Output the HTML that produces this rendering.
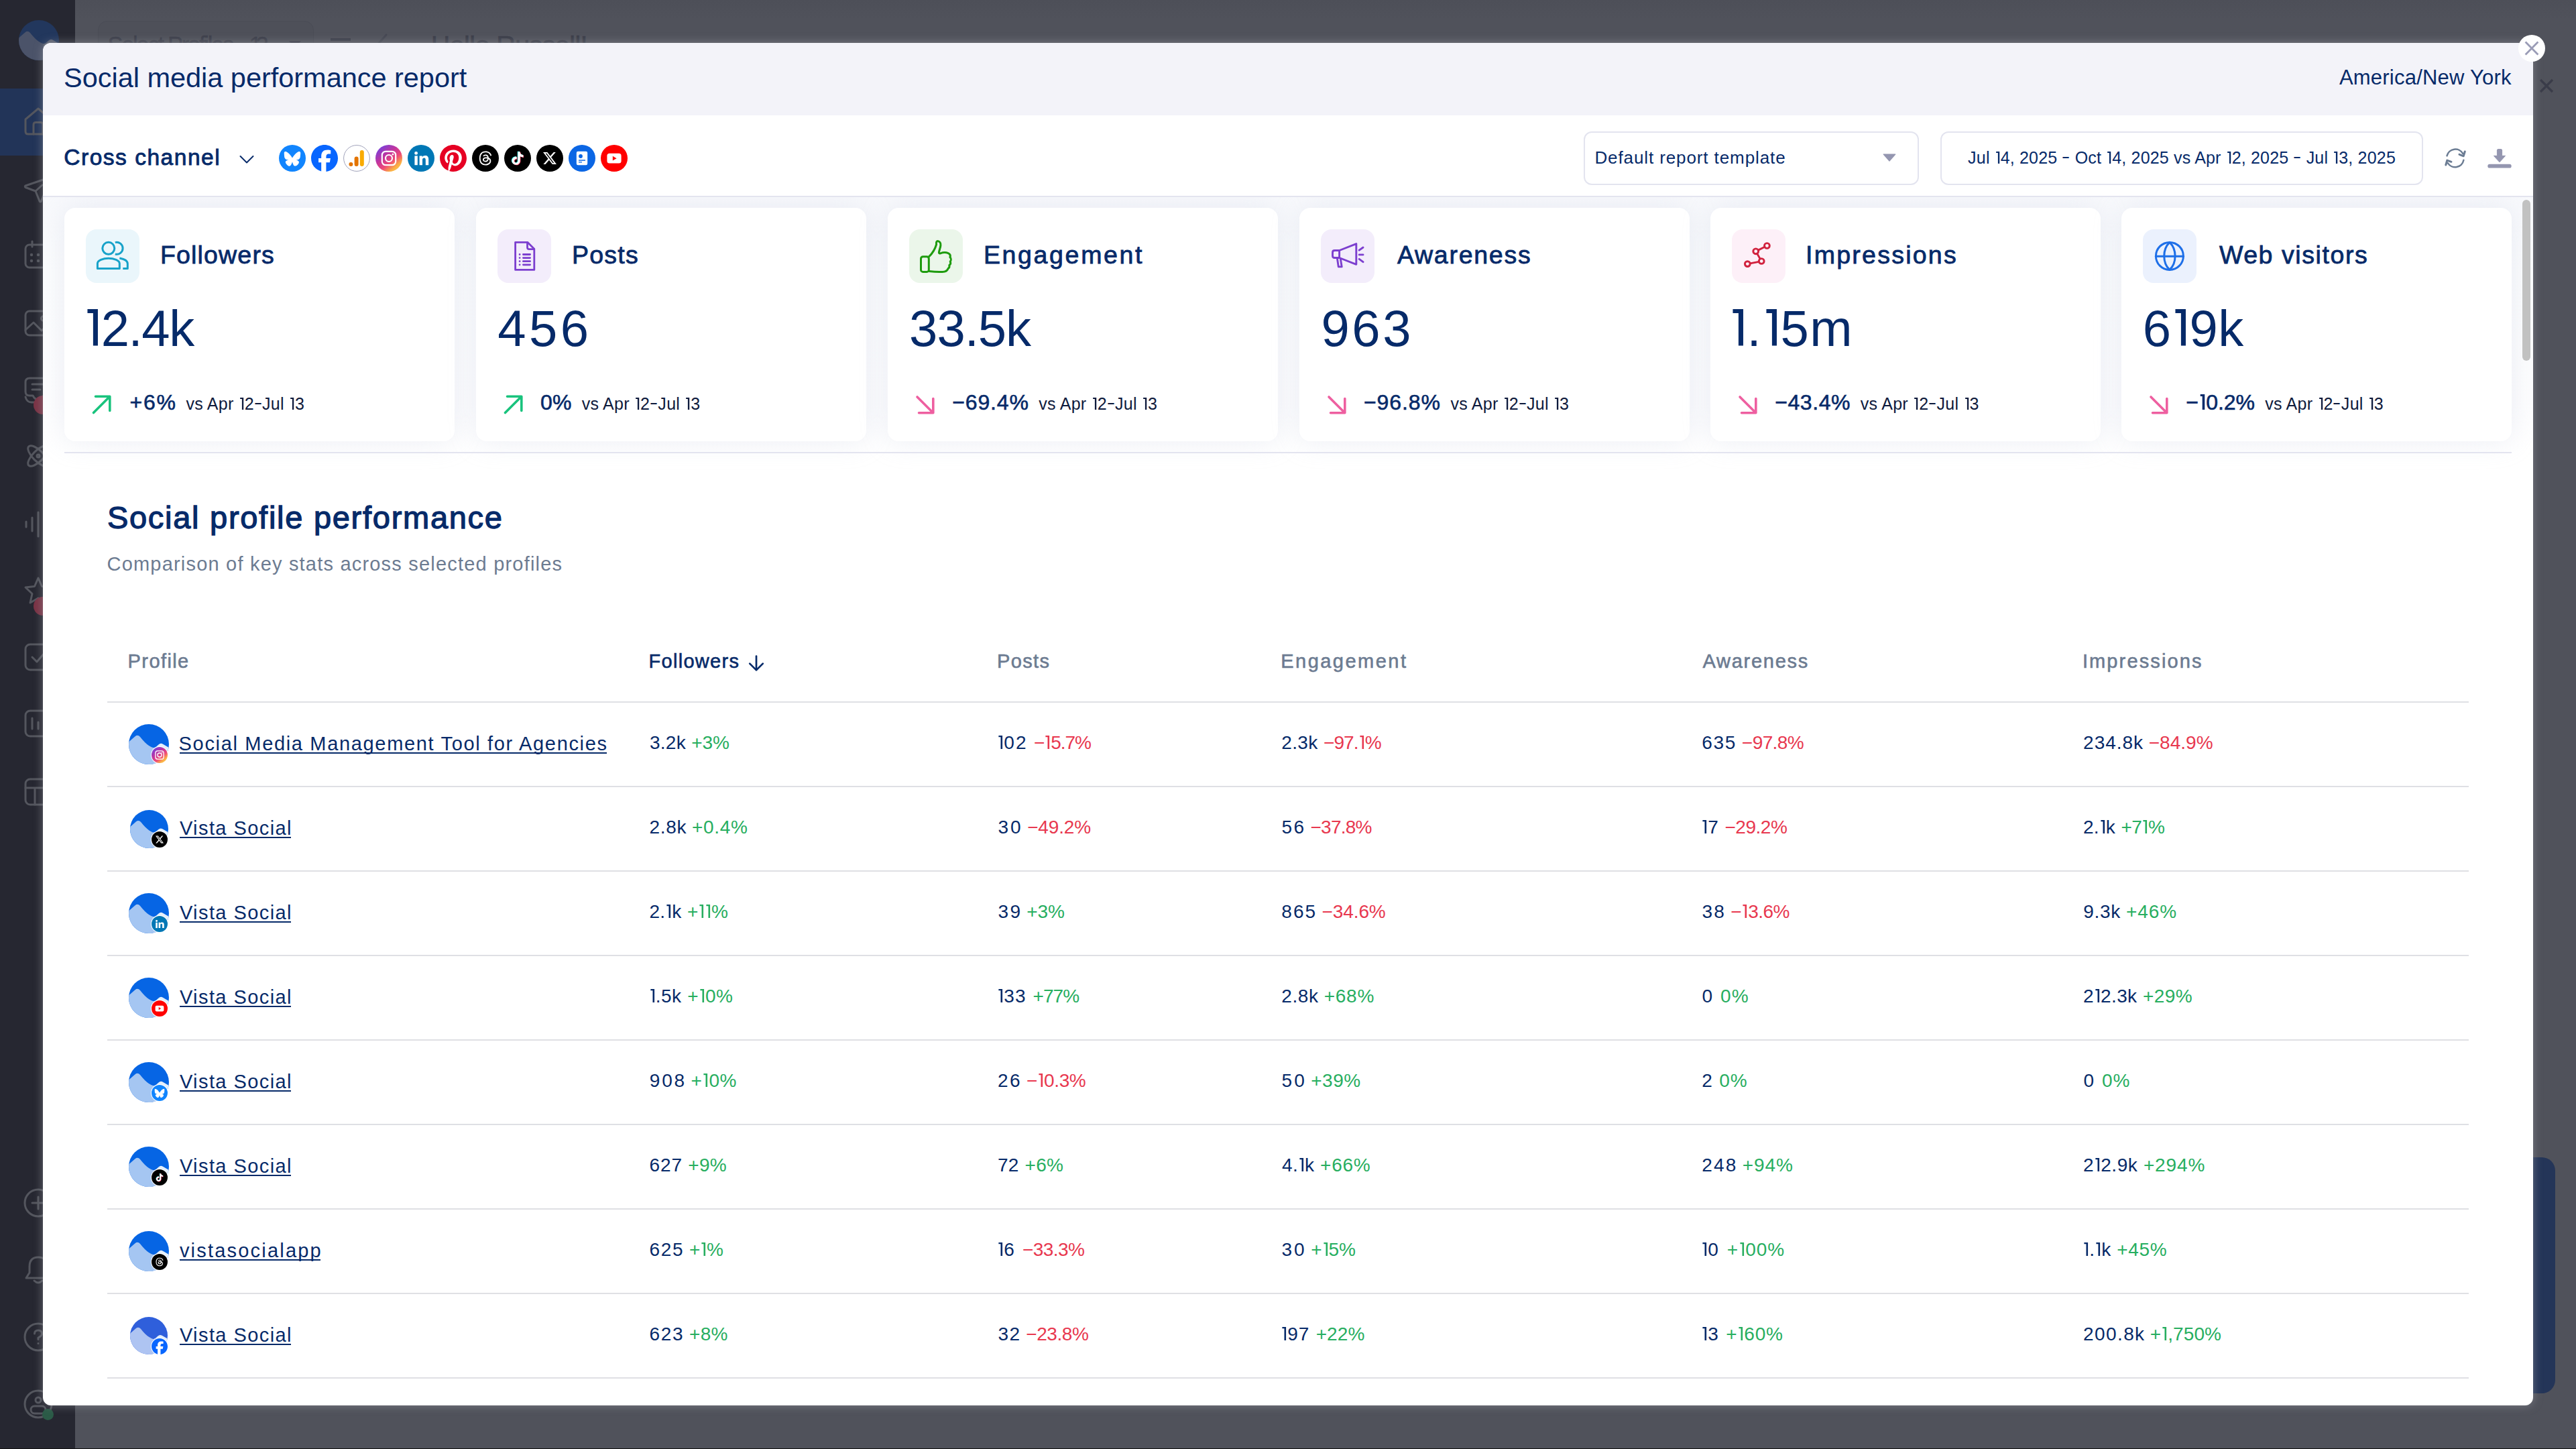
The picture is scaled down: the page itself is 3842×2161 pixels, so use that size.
<!DOCTYPE html><html><head><meta charset='utf-8'><title>Social media performance report</title><style>
*{box-sizing:border-box;margin:0;padding:0}
html,body{width:3842px;height:2161px;overflow:hidden;background:#50525b;font-family:"Liberation Sans",sans-serif;color:#062a69}
.abs{position:absolute}
#side{position:absolute;left:0;top:0;width:112px;height:2161px;background:#262731}
#side .act{position:absolute;left:0;top:132px;width:112px;height:100px;background:#223458}
#main{position:absolute;left:112px;top:0;width:3730px;height:2161px;background:#50525b}
#modal{position:absolute;left:64px;top:64px;width:3714px;height:2032px;background:#fff;border-radius:12px;overflow:hidden;box-shadow:0 0 14px rgba(150,152,160,.6)}
#mhead{position:absolute;left:0;top:0;width:100%;height:108px;background:#f3f3f9}
#tool{position:absolute;left:0;top:108px;width:100%;height:122px;border-bottom:2px solid #e3e4ef;background:#fff}
.t{position:absolute;white-space:nowrap;line-height:1;transform-origin:0 0}
.card{position:absolute;top:16px;width:582px;height:348px;background:#fff;border-radius:16px;box-shadow:0 0 40px rgba(190,197,220,.28)}
.ibox{position:absolute;left:32px;top:32px;width:80px;height:80px;border-radius:16px}
.hr{position:absolute;height:2px;background:#dfe0e4}
.one{display:inline-block;width:.358em;height:.716em;vertical-align:baseline;fill:currentColor}
</style></head><body>
<div id='main'></div><div id='side'><div class='act'></div></div>
<div class='abs' style='left:112px;top:0;width:3730px;height:30px;background:linear-gradient(#4d4f58,#50525b)'></div>
<div class='abs' style='left:146px;top:31px;width:322px;height:90px;border-radius:14px;background:#4e5059;border:1px solid #4a4c56'></div>
<div class='t' style='left:160.38px;top:49.80px;font-size:34.5px;letter-spacing:-2.259px;color:#3c3e4a;-webkit-text-stroke:0.4px currentColor;'>Select Profiles</div>
<div class='t' style='left:371.38px;top:49.80px;font-size:34.5px;letter-spacing:-9.125px;color:#3c3e4a;-webkit-text-stroke:0.4px currentColor;'>12</div>
<svg class='abs' style='left:430px;top:60px' width='20' height='12' viewBox='0 0 20 12'><path d='M1 1 H19 L10 11 Z' fill='#3c3e4a'/></svg>
<div class='abs' style='left:493px;top:57px;width:30px;height:4px;background:#3c3e4a'></div>
<svg class='abs' style='left:556px;top:50px' width='30' height='20' viewBox='0 0 30 20' fill='none' stroke='#454752' stroke-width='3' stroke-linecap='round'><path d='M20 2 L6 18'/></svg>
<div class='t' style='left:642.75px;top:47.56px;font-size:39.5px;letter-spacing:-0.587px;color:#3a3c48;-webkit-text-stroke:0.6px currentColor;'>Hello Russell!</div>
<svg class='abs' style='left:27.5px;top:30px' width='60' height='60' viewBox='0 0 60 60'><defs><clipPath id='lg'><circle cx='30' cy='30' r='30'/></clipPath></defs><g clip-path='url(#lg)'><rect width='60' height='60' fill='#22375d'/><path d='M-1 27.5 L9.5 18.2 Q13.5 15 17 19 Q24 28 30 32 Q34.5 35 37.5 35.6 L60 48 V61 H-1 Z' fill='#4b5369'/><path d='M36.5 35.8 Q41 34.5 44.5 30.5 Q47.5 27.6 51 29.8 L61 35.5 V61 H36 Z' fill='#5d6373'/></g></svg>
<svg class='abs' style='left:35.0px;top:159.0px' width='44' height='44' viewBox='0 0 44 44' fill='none' stroke='#54565e' stroke-width='3' stroke-linecap='round' stroke-linejoin='round'><path d='M3 19 L22 3 L41 19 V37 Q41 41 37 41 H7 Q3 41 3 37 Z'/><path d='M15 41 V27 Q15 23.5 18.5 23.5 H25.5 Q29 23.5 29 27 V41'/></svg>
<svg class='abs' style='left:35.0px;top:260.0px' width='44' height='44' viewBox='0 0 44 44' fill='none' stroke='#54565e' stroke-width='3' stroke-linecap='round' stroke-linejoin='round'><path d='M41 4 L3 17 Q1.5 18 3 19.5 L18 25 L24 40 Q25 42 26.5 40 Z'/><path d='M18 25 L28 16'/></svg>
<svg class='abs' style='left:35.0px;top:358.0px' width='44' height='44' viewBox='0 0 44 44' fill='none' stroke='#54565e' stroke-width='3' stroke-linecap='round' stroke-linejoin='round'><rect x='3' y='7' width='38' height='34' rx='6'/><path d='M13 2 V10 M31 2 V10'/><path d='M12 22 h0.01 M22 22 h0.01 M32 22 h0.01 M12 31 h0.01 M22 31 h0.01 M32 31 h0.01' stroke-width='4.5'/></svg>
<svg class='abs' style='left:35.0px;top:460.0px' width='44' height='44' viewBox='0 0 44 44' fill='none' stroke='#54565e' stroke-width='3' stroke-linecap='round' stroke-linejoin='round'><rect x='3' y='4' width='38' height='36' rx='6'/><circle cx='30' cy='15' r='3.5'/><path d='M3 32 L15 21 L27 33 L33 28 L41 35'/></svg>
<svg class='abs' style='left:35.0px;top:560.0px' width='44' height='44' viewBox='0 0 44 44' fill='none' stroke='#54565e' stroke-width='3' stroke-linecap='round' stroke-linejoin='round'><path d='M9 4 H35 Q41 4 41 10 V24 Q41 30 35 30 H30 Q27 36 22 36 Q17 36 14 30 H9 Q3 30 3 24 V10 Q3 4 9 4 Z'/><path d='M13 13 H31 M13 21 H25'/><path d='M3 32 Q5 40 12 40 H32'/></svg>
<svg class='abs' style='left:35.0px;top:658.0px' width='44' height='44' viewBox='0 0 44 44' fill='none' stroke='#54565e' stroke-width='3' stroke-linecap='round' stroke-linejoin='round'><ellipse cx='22' cy='22' rx='20' ry='8' transform='rotate(45 22 22)'/><ellipse cx='22' cy='22' rx='20' ry='8' transform='rotate(-45 22 22)'/><circle cx='22' cy='22' r='2'/></svg>
<svg class='abs' style='left:35.0px;top:760.0px' width='44' height='44' viewBox='0 0 44 44' fill='none' stroke='#54565e' stroke-width='3' stroke-linecap='round' stroke-linejoin='round'><path d='M4 18 V26 M13 12 V32 M22 4 V40 M31 12 V32 M40 18 V26'/></svg>
<svg class='abs' style='left:35.0px;top:859.0px' width='44' height='44' viewBox='0 0 44 44' fill='none' stroke='#54565e' stroke-width='3' stroke-linecap='round' stroke-linejoin='round'><path d='M22 3 L27.5 15.5 L41 17 L31 26.5 L34 40 L22 33 L10 40 L13 26.5 L3 17 L16.5 15.5 Z'/></svg>
<svg class='abs' style='left:35.0px;top:958.0px' width='44' height='44' viewBox='0 0 44 44' fill='none' stroke='#54565e' stroke-width='3' stroke-linecap='round' stroke-linejoin='round'><rect x='3' y='3' width='38' height='38' rx='7'/><path d='M13 22 L20 29 L32 15'/></svg>
<svg class='abs' style='left:35.0px;top:1057.0px' width='44' height='44' viewBox='0 0 44 44' fill='none' stroke='#54565e' stroke-width='3' stroke-linecap='round' stroke-linejoin='round'><rect x='3' y='3' width='38' height='38' rx='7'/><path d='M13 14 V30 M22 20 V30 M31 10 V30'/></svg>
<svg class='abs' style='left:35.0px;top:1159.0px' width='44' height='44' viewBox='0 0 44 44' fill='none' stroke='#54565e' stroke-width='3' stroke-linecap='round' stroke-linejoin='round'><rect x='3' y='3' width='38' height='38' rx='7'/><path d='M3 16 H41 M17 16 V41'/></svg>
<svg class='abs' style='left:35.0px;top:1772.0px' width='44' height='44' viewBox='0 0 44 44' fill='none' stroke='#54565e' stroke-width='3' stroke-linecap='round' stroke-linejoin='round'><circle cx='22' cy='22' r='20'/><path d='M22 13 V31 M13 22 H31'/></svg>
<svg class='abs' style='left:35.0px;top:1872.0px' width='44' height='44' viewBox='0 0 44 44' fill='none' stroke='#54565e' stroke-width='3' stroke-linecap='round' stroke-linejoin='round'><path d='M22 3 Q35 3 35 17 V26 L40 34 H4 L9 26 V17 Q9 3 22 3 Z'/><path d='M16 38 Q22 44 28 38'/></svg>
<svg class='abs' style='left:35.0px;top:1972.0px' width='44' height='44' viewBox='0 0 44 44' fill='none' stroke='#54565e' stroke-width='3' stroke-linecap='round' stroke-linejoin='round'><circle cx='22' cy='22' r='20'/><path d='M16.5 17 Q16.5 12 22 12 Q27.5 12 27.5 17 Q27.5 20.5 22 23 V25.5 M22 31.5 h0.01'/></svg>
<svg class='abs' style='left:35.0px;top:2072.0px' width='44' height='44' viewBox='0 0 44 44' fill='none' stroke='#54565e' stroke-width='3' stroke-linecap='round' stroke-linejoin='round'><circle cx='22' cy='22' r='20'/><circle cx='22' cy='16' r='4'/><rect x='11' y='25' width='22' height='11' rx='5.5'/></svg>
<div class='abs' style='left:50px;top:590px;width:28px;height:28px;border-radius:50%;background:#7a3345'></div>
<div class='abs' style='left:50px;top:890px;width:28px;height:28px;border-radius:50%;background:#7a3345'></div>
<div class='abs' style='left:63px;top:2101px;width:17px;height:17px;border-radius:50%;background:#2b5b47'></div>
<div class='abs' style='left:3700px;top:1726px;width:110.5px;height:352px;border-radius:0 20px 20px 0;background:#243558'></div>
<svg class='abs' style='left:3786px;top:116px' width='24' height='24' viewBox='0 0 24 24' fill='none' stroke='#3a3c49' stroke-width='3.2' stroke-linecap='butt'><path d='M3 3 L21 21 M21 3 L3 21'/></svg>
<div class='abs' style='left:0;top:2160px;width:3842px;height:1px;background:#111'></div>
<div id='modal'>
<div id='mhead'></div><div id='tool'></div>
<div class='t' style='left:31.12px;top:31.37px;font-size:41.5px;letter-spacing:-0.029px;'>Social media performance report</div>
<div class='t' style='left:3424.88px;top:35.76px;font-size:31px;letter-spacing:0.225px;'>America/New York</div>
<div class='t' style='left:31.25px;top:153.64px;font-size:33.5px;letter-spacing:1.521px;-webkit-text-stroke:0.9px currentColor;'>Cross channel</div>
<svg class='abs' style='left:290px;top:164px' width='28' height='20' viewBox='0 0 28 20' fill='none' stroke='#062a69' stroke-width='2' stroke-linecap='round' stroke-linejoin='round'><path d='M4.5 5 L14 14.5 L23.5 5'/></svg>
<svg class='abs' style='left:352px;top:152px;' width='40' height='40' viewBox='0 0 40 40'><circle cx='20' cy='20' r='20' fill='#1185fe'/><path transform='translate(7.75 8.55) scale(1.0208)' d='M12 10.8c-1.087-2.114-4.046-6.053-6.798-7.995C2.566.944 1.561 1.266.902 1.565.139 1.908 0 3.08 0 3.768c0 .69.378 5.65.624 6.479.815 2.736 3.713 3.66 6.383 3.364.136-.02.275-.039.415-.056-.138.022-.276.04-.415.056-3.912.58-7.387 2.005-2.83 7.078 5.013 5.19 6.87-1.113 7.823-4.308.953 3.195 2.05 9.271 7.733 4.308 4.267-4.308 1.172-6.498-2.74-7.078a8.741 8.741 0 0 1-.415-.056c.14.017.279.036.415.056 2.67.297 5.568-.628 6.383-3.364.246-.828.624-5.79.624-6.478 0-.69-.139-1.861-.902-2.206-.659-.298-1.664-.62-4.3 1.24C16.046 4.748 13.087 8.687 12 10.8Z' fill='#fff' /></svg>
<svg class='abs' style='left:400px;top:152px;' width='40' height='40' viewBox='0 0 40 40'><circle cx='20' cy='20' r='19.6' fill='#fff'/><path transform='translate(0.00 0.00) scale(1.6667)' d='M9.101 23.691v-7.98H6.627v-3.667h2.474v-1.58c0-4.085 1.848-5.978 5.858-5.978.401 0 .955.042 1.468.103a8.68 8.68 0 0 1 1.141.195v3.325a8.623 8.623 0 0 0-.653-.036 26.805 26.805 0 0 0-.733-.009c-.707 0-1.259.096-1.675.309a1.686 1.686 0 0 0-.679.622c-.258.42-.374.995-.374 1.752v1.297h3.919l-.386 2.103-.287 1.564h-3.246v8.245C19.396 23.238 24 18.179 24 12.044c0-6.627-5.373-12-12-12s-12 5.373-12 12c0 5.628 3.874 10.35 9.101 11.647Z' fill='#0866ff' /></svg>
<svg class='abs' style='left:448px;top:152px;' width='40' height='40' viewBox='0 0 40 40'><circle cx='20' cy='20' r='19.4' fill='#fff' stroke='#a0a2ba' stroke-width='1'/><circle cx='11.4' cy='29' r='3' fill='#e37400'/><rect x='16.6' y='17.6' width='6' height='14.4' rx='3' fill='#e37400'/><rect x='24.8' y='8' width='6' height='24' rx='3' fill='#f9ab00'/></svg>
<svg class='abs' style='left:496px;top:152px;' width='40' height='40' viewBox='0 0 40 40'><defs><linearGradient id='igt' x1='0.15' y1='0.1' x2='0.85' y2='0.95'><stop offset='0' stop-color='#7a3fd8'/><stop offset='0.35' stop-color='#c2359f'/><stop offset='0.62' stop-color='#ef4a77'/><stop offset='0.85' stop-color='#fbb044'/><stop offset='1' stop-color='#fcc552'/></linearGradient></defs><circle cx='20' cy='20' r='20' fill='url(#igt)'/><rect x='9.8' y='9.8' width='20.4' height='20.4' rx='5.4' fill='none' stroke='#fff' stroke-width='2.2'/><circle cx='20' cy='20' r='5' fill='none' stroke='#fff' stroke-width='2.2'/><circle cx='25.9' cy='14.2' r='1.35' fill='#fff'/></svg>
<svg class='abs' style='left:544px;top:152px;' width='40' height='40' viewBox='0 0 40 40'><circle cx='20' cy='20' r='20' fill='#0077b5'/><circle cx='12.6' cy='12.4' r='2.45' fill='#fff'/><rect x='10.4' y='16.4' width='4.4' height='13.8' fill='#fff'/><path d='M17.6 16.4 H21.8 V18.3 C22.6 16.9 24.2 16 26.2 16 C29.6 16 31.2 18 31.2 21.6 V30.2 H26.8 V22.6 C26.8 20.7 26.1 19.6 24.6 19.6 C23 19.6 22 20.7 22 22.6 V30.2 H17.6 Z' fill='#fff'/></svg>
<svg class='abs' style='left:592px;top:152px;' width='40' height='40' viewBox='0 0 40 40'><circle cx='20' cy='20' r='19.6' fill='#fff'/><path transform='translate(0.00 0.00) scale(1.6667)' d='M12.017 0C5.396 0 .029 5.367.029 11.987c0 5.079 3.158 9.417 7.618 11.162-.105-.949-.199-2.403.041-3.439.219-.937 1.406-5.957 1.406-5.957s-.359-.72-.359-1.781c0-1.663.967-2.911 2.168-2.911 1.024 0 1.518.769 1.518 1.688 0 1.029-.653 2.567-.992 3.992-.285 1.193.6 2.165 1.775 2.165 2.128 0 3.768-2.245 3.768-5.487 0-2.861-2.063-4.869-5.008-4.869-3.41 0-5.409 2.562-5.409 5.199 0 1.033.394 2.143.889 2.741.099.12.112.225.085.345-.09.375-.293 1.199-.334 1.363-.053.225-.172.271-.401.165-1.495-.69-2.433-2.878-2.433-4.646 0-3.776 2.748-7.252 7.92-7.252 4.158 0 7.392 2.967 7.392 6.923 0 4.135-2.607 7.462-6.233 7.462-1.214 0-2.354-.629-2.758-1.379l-.749 2.848c-.269 1.045-1.004 2.352-1.498 3.146 1.123.345 2.306.535 3.55.535 6.607 0 11.985-5.365 11.985-11.987C23.97 5.39 18.592.026 11.985.026L12.017 0z' fill='#e60023' /></svg>
<svg class='abs' style='left:640px;top:152px;' width='40' height='40' viewBox='0 0 40 40'><circle cx='20' cy='20' r='20' fill='#000'/><path transform='translate(9.50 9.50) scale(0.8750)' d='M12.186 24h-.007c-3.581-.024-6.334-1.205-8.184-3.509C2.35 18.44 1.5 15.586 1.472 12.01v-.017c.03-3.579.879-6.43 2.525-8.482C5.845 1.205 8.6.024 12.18 0h.014c2.746.02 5.043.725 6.826 2.098 1.677 1.29 2.858 3.13 3.509 5.467l-2.04.569c-1.104-3.96-3.898-5.984-8.304-6.015-2.91.022-5.11.936-6.54 2.717C4.307 6.504 3.616 8.914 3.589 12c.027 3.086.718 5.496 2.057 7.164 1.43 1.783 3.631 2.698 6.54 2.717 2.623-.02 4.358-.631 5.8-2.045 1.647-1.613 1.618-3.593 1.09-4.798-.31-.71-.873-1.3-1.634-1.75-.192 1.352-.622 2.446-1.284 3.272-.886 1.102-2.14 1.704-3.73 1.79-1.202.065-2.361-.218-3.259-.801-1.063-.689-1.685-1.74-1.752-2.964-.065-1.19.408-2.285 1.33-3.082.88-.76 2.119-1.207 3.583-1.291a13.853 13.853 0 0 1 3.02.142c-.126-.742-.375-1.332-.75-1.757-.513-.586-1.308-.883-2.359-.89h-.029c-.844 0-1.992.232-2.721 1.32L7.734 7.847c.98-1.454 2.568-2.256 4.478-2.256h.044c3.194.02 5.097 1.975 5.287 5.388.108.046.216.094.321.142 1.49.7 2.58 1.761 3.154 3.07.797 1.82.871 4.79-1.548 7.158-1.85 1.81-4.094 2.628-7.277 2.65Zm1.003-11.69c-.242 0-.487.007-.739.021-1.836.103-2.98.946-2.916 2.143.067 1.256 1.452 1.839 2.784 1.767 1.224-.065 2.818-.543 3.086-3.71a10.5 10.5 0 0 0-2.215-.221z' fill='#fff' /></svg>
<svg class='abs' style='left:688px;top:152px;' width='40' height='40' viewBox='0 0 40 40'><circle cx='20' cy='20' r='20' fill='#000'/><path transform='translate(9.55 9.85) scale(0.8125)' d='M12.525.02c1.31-.02 2.61-.01 3.91-.02.08 1.53.63 3.09 1.75 4.17 1.12 1.11 2.7 1.62 4.24 1.79v4.03c-1.44-.05-2.89-.35-4.2-.97-.57-.26-1.1-.59-1.62-.93-.01 2.92.01 5.84-.02 8.75-.08 1.4-.54 2.79-1.35 3.94-1.31 1.92-3.58 3.17-5.91 3.21-1.43.08-2.86-.31-4.08-1.03-2.02-1.19-3.44-3.37-3.65-5.71-.02-.5-.03-1-.01-1.49.18-1.9 1.12-3.72 2.58-4.96 1.66-1.44 3.98-2.13 6.15-1.72.02 1.48-.04 2.96-.04 4.44-.99-.32-2.15-.23-3.02.37-.63.41-1.11 1.04-1.36 1.75-.21.51-.15 1.07-.14 1.61.24 1.64 1.82 3.02 3.5 2.87 1.12-.01 2.19-.66 2.77-1.61.19-.33.4-.67.41-1.06.1-1.79.06-3.57.07-5.36.01-4.03-.01-8.05.02-12.07z' fill='#25f4ee' /><path transform='translate(10.95 10.85) scale(0.8125)' d='M12.525.02c1.31-.02 2.61-.01 3.91-.02.08 1.53.63 3.09 1.75 4.17 1.12 1.11 2.7 1.62 4.24 1.79v4.03c-1.44-.05-2.89-.35-4.2-.97-.57-.26-1.1-.59-1.62-.93-.01 2.92.01 5.84-.02 8.75-.08 1.4-.54 2.79-1.35 3.94-1.31 1.92-3.58 3.17-5.91 3.21-1.43.08-2.86-.31-4.08-1.03-2.02-1.19-3.44-3.37-3.65-5.71-.02-.5-.03-1-.01-1.49.18-1.9 1.12-3.72 2.58-4.96 1.66-1.44 3.98-2.13 6.15-1.72.02 1.48-.04 2.96-.04 4.44-.99-.32-2.15-.23-3.02.37-.63.41-1.11 1.04-1.36 1.75-.21.51-.15 1.07-.14 1.61.24 1.64 1.82 3.02 3.5 2.87 1.12-.01 2.19-.66 2.77-1.61.19-.33.4-.67.41-1.06.1-1.79.06-3.57.07-5.36.01-4.03-.01-8.05.02-12.07z' fill='#fe2c55' /><path transform='translate(10.25 10.35) scale(0.8125)' d='M12.525.02c1.31-.02 2.61-.01 3.91-.02.08 1.53.63 3.09 1.75 4.17 1.12 1.11 2.7 1.62 4.24 1.79v4.03c-1.44-.05-2.89-.35-4.2-.97-.57-.26-1.1-.59-1.62-.93-.01 2.92.01 5.84-.02 8.75-.08 1.4-.54 2.79-1.35 3.94-1.31 1.92-3.58 3.17-5.91 3.21-1.43.08-2.86-.31-4.08-1.03-2.02-1.19-3.44-3.37-3.65-5.71-.02-.5-.03-1-.01-1.49.18-1.9 1.12-3.72 2.58-4.96 1.66-1.44 3.98-2.13 6.15-1.72.02 1.48-.04 2.96-.04 4.44-.99-.32-2.15-.23-3.02.37-.63.41-1.11 1.04-1.36 1.75-.21.51-.15 1.07-.14 1.61.24 1.64 1.82 3.02 3.5 2.87 1.12-.01 2.19-.66 2.77-1.61.19-.33.4-.67.41-1.06.1-1.79.06-3.57.07-5.36.01-4.03-.01-8.05.02-12.07z' fill='#fff' /></svg>
<svg class='abs' style='left:736px;top:152px;' width='40' height='40' viewBox='0 0 40 40'><circle cx='20' cy='20' r='20' fill='#000'/><path transform='translate(10.00 10.00) scale(0.8333)' d='M18.901 1.153h3.68l-8.04 9.19L24 22.846h-7.406l-5.8-7.584-6.638 7.584H.474l8.6-9.83L0 1.154h7.594l5.243 6.932ZM17.61 20.644h2.039L6.486 3.24H4.298Z' fill='#fff' /></svg>
<svg class='abs' style='left:784px;top:152px;' width='40' height='40' viewBox='0 0 40 40'><circle cx='20' cy='20' r='20' fill='#0b66e4'/><rect x='11.8' y='9.8' width='16.4' height='20.4' rx='2.2' fill='#fff'/><circle cx='18' cy='17' r='2.9' fill='#0b66e4'/><rect x='15' y='22.3' width='10' height='1.5' fill='#0b66e4'/><rect x='15' y='25.2' width='5' height='1.3' fill='#0b66e4'/></svg>
<svg class='abs' style='left:832px;top:152px;' width='40' height='40' viewBox='0 0 40 40'><circle cx='20' cy='20' r='20' fill='#ff0000'/><rect x='9.4' y='12.8' width='21.2' height='14.8' rx='3.6' fill='#fff'/><path d='M17.8 16.8 L23.6 20.2 L17.8 23.6 Z' fill='#ff0000'/></svg>
<div class='abs' style='left:2298px;top:132px;width:500px;height:80px;border:2px solid #e3e4ef;border-radius:12px'></div>
<div class='t' style='left:2314.38px;top:157.99px;font-size:26px;letter-spacing:0.898px;'>Default report template</div>
<svg class='abs' style='left:2744px;top:165px' width='20' height='12' viewBox='0 0 20 12'><path d='M1.2 1 H18.8 L10 11 Z' fill='#9496b0' stroke='#9496b0' stroke-width='1.2' stroke-linejoin='round'/></svg>
<div class='abs' style='left:2830px;top:132px;width:720px;height:80px;border:2px solid #e3e4ef;border-radius:12px'></div>
<div class='t' style='left:2871.12px;top:158.84px;font-size:25px;letter-spacing:0.184px;'>Jul <svg class='one' viewBox='0 0 358 716'><path d='M85 0 H289 V716 H196 V78 H85 Z'/></svg>4, 2025 <span style='display:inline-block;transform:translateY(-0.085em) scaleX(1.5);margin:0 0.07em'>-</span> Oct <svg class='one' viewBox='0 0 358 716'><path d='M85 0 H289 V716 H196 V78 H85 Z'/></svg>4, 2025 vs Apr <svg class='one' viewBox='0 0 358 716'><path d='M85 0 H289 V716 H196 V78 H85 Z'/></svg>2, 2025 <span style='display:inline-block;transform:translateY(-0.085em) scaleX(1.5);margin:0 0.07em'>-</span> Jul <svg class='one' viewBox='0 0 358 716'><path d='M85 0 H289 V716 H196 V78 H85 Z'/></svg>3, 2025</div>
<svg class='abs' style='left:3581px;top:154px' width='36' height='36' viewBox='0 0 36 36' fill='none' stroke='#6b7c93' stroke-width='2.5' stroke-linecap='round' stroke-linejoin='round'><path d='M4.5 14.4 A12.9 12.9 0 0 1 28.2 11'/><path d='M31.3 8 L29.2 14.8 L23 12.4' stroke-width='3'/><path d='M29.4 20.8 A12.9 12.9 0 0 1 5.8 25.2'/><path d='M2.8 28 L4.8 21.1 L11 23.3' stroke-width='3'/></svg>
<svg class='abs' style='left:3646px;top:158.4px' width='36' height='30' viewBox='0 0 36 30'><path d='M15.9 0.6 H20.1 Q21.6 0.6 21.6 2.1 V10.4 H26.6 L18 19.8 L9.4 10.4 H14.4 V2.1 Q14.4 0.6 15.9 0.6 Z' fill='#9496b0' stroke='#9496b0' stroke-width='1' stroke-linejoin='round'/><rect x='0.3' y='22.8' width='35.4' height='5.8' rx='2.9' fill='#9496b0'/></svg>
<div class='abs' style='left:0;top:230px;width:3714px;height:420px;overflow:hidden'>
<div class='abs' style='left:0;top:0px;width:3714px;height:380px;background:linear-gradient(#f8f9fc,#fbfcfd 30%,#fdfdfe 80%,#fff)'></div>
<div class='card' style='left:32.0px'>
<div class='ibox' style='background:#eaf6fb'><svg class='abs' style='left:0;top:0' width='80' height='80' viewBox='0 0 80 80' fill='none' stroke='#17a2c9' stroke-width='3' stroke-linecap='round' stroke-linejoin='round'><circle cx='33.8' cy='28.3' r='9'/><path d='M43.8 19.6 A9 9 0 1 1 43.8 37' stroke-linecap='butt'/><path d='M17.4 58.5 H50.3 V51 C50.3 46.5 42 43.3 33.8 43.3 C25.6 43.3 17.4 46.5 17.4 51 Z' stroke-linejoin='round'/><path d='M50.3 42.9 C56.5 44 62.3 46.8 62.3 51.2 V58.5 H55.3' stroke-linecap='butt'/></svg></div>
<div class='t' style='left:142.88px;top:51.76px;font-size:37.5px;letter-spacing:1.188px;-webkit-text-stroke:0.8px currentColor;'>Followers</div>
<div class='t' style='left:27.54px;top:141.67px;font-size:76px;letter-spacing:-1.381px;'><svg class='one' viewBox='0 0 358 716'><path d='M85 0 H289 V716 H196 V78 H85 Z'/></svg>2.4k</div>
<svg class='abs' style='left:40px;top:277px' width='32' height='32' viewBox='0 0 32 32' fill='none' stroke='#19c37d' stroke-width='3.6' stroke-linecap='round' stroke-linejoin='round'><path d='M3.5 28.5 L27 5'/><path d='M6.5 4.2 H27.8 V25.5'/></svg>
<div class='t' style='left:97.50px;top:274.21px;font-size:32px;letter-spacing:1.820px;-webkit-text-stroke:0.6px currentColor;'>+6%</div>
<div class='t' style='left:181.38px;top:279.84px;font-size:25px;letter-spacing:0.286px;color:#0e1a3c;'>vs Apr <svg class='one' viewBox='0 0 358 716'><path d='M85 0 H289 V716 H196 V78 H85 Z'/></svg>2<span style='display:inline-block;transform:translateY(-0.085em) scaleX(1.5);margin:0 0.07em'>-</span>Jul <svg class='one' viewBox='0 0 358 716'><path d='M85 0 H289 V716 H196 V78 H85 Z'/></svg>3</div>
</div>
<div class='card' style='left:646.0px'>
<div class='ibox' style='background:#f3edfb'><svg class='abs' style='left:0;top:0' width='80' height='80' viewBox='0 0 80 80' fill='none' stroke='#7c3fcf' stroke-width='2.8' stroke-linecap='round' stroke-linejoin='round'><path d='M26.6 19.3 H44.8 L54.8 29.2 V60.4 H26.6 Z' stroke-linejoin='round'/><path d='M44.5 19.6 V27 Q44.5 29.7 47.2 29.7 H54.6'/><path d='M33.1 37.5 h0.01 M38.4 37.5 H48.6'/><path d='M33.1 42.6 h0.01 M38.4 42.6 H48.6'/><path d='M33.1 47.7 h0.01 M38.4 47.7 H48.6'/><path d='M33.1 52.8 h0.01 M38.4 52.8 H48.6'/></svg></div>
<div class='t' style='left:142.88px;top:51.76px;font-size:37.5px;letter-spacing:1.262px;-webkit-text-stroke:0.8px currentColor;'>Posts</div>
<div class='t' style='left:32.25px;top:141.67px;font-size:76px;letter-spacing:4.457px;'>456</div>
<svg class='abs' style='left:40px;top:277px' width='32' height='32' viewBox='0 0 32 32' fill='none' stroke='#19c37d' stroke-width='3.6' stroke-linecap='round' stroke-linejoin='round'><path d='M3.5 28.5 L27 5'/><path d='M6.5 4.2 H27.8 V25.5'/></svg>
<div class='t' style='left:96.05px;top:274.21px;font-size:32px;letter-spacing:0.078px;-webkit-text-stroke:0.6px currentColor;'>0%</div>
<div class='t' style='left:157.67px;top:279.84px;font-size:25px;letter-spacing:0.286px;color:#0e1a3c;'>vs Apr <svg class='one' viewBox='0 0 358 716'><path d='M85 0 H289 V716 H196 V78 H85 Z'/></svg>2<span style='display:inline-block;transform:translateY(-0.085em) scaleX(1.5);margin:0 0.07em'>-</span>Jul <svg class='one' viewBox='0 0 358 716'><path d='M85 0 H289 V716 H196 V78 H85 Z'/></svg>3</div>
</div>
<div class='card' style='left:1260.0px'>
<div class='ibox' style='background:#ebf6ea'><svg class='abs' style='left:0;top:0' width='80' height='80' viewBox='0 0 80 80' fill='none' stroke='#1e9b0e' stroke-width='3' stroke-linecap='round' stroke-linejoin='round'><rect x='17.5' y='40.8' width='11.8' height='22.6' rx='3'/><path d='M29.6 40.6 C34.5 36 38.6 29.5 40.6 22.5 C39.8 19.5 41 17.6 42.6 17.6 C45.6 18 47.3 20.6 46.9 24 C46.6 27.5 44.6 31.5 44.4 34.6 C44.3 35.8 45.2 36.2 46.4 35.8 C50 34.6 55 34.3 58.2 35.6 C60.8 36.8 61.8 39.2 60.9 41.6 C62.6 43.2 62.8 46.2 61.2 48 C62.2 50 61.6 52.4 59.8 53.6 C60.4 55.6 59.6 57.4 58.2 58.2 C57.2 61.4 53.6 63.4 49.6 63.4 C42.6 63.8 35.6 63.2 29.8 62.4'/></svg></div>
<div class='t' style='left:142.88px;top:51.76px;font-size:37.5px;letter-spacing:2.661px;-webkit-text-stroke:0.8px currentColor;'>Engagement</div>
<div class='t' style='left:32.12px;top:141.67px;font-size:76px;letter-spacing:-0.992px;'>33.5k</div>
<svg class='abs' style='left:40px;top:277px' width='32' height='32' viewBox='0 0 32 32' fill='none' stroke='#ee5fa0' stroke-width='3.6' stroke-linecap='round' stroke-linejoin='round'><path d='M4 5 L27 28'/><path d='M27.8 7.5 V28.8 H6.5'/></svg>
<div class='t' style='left:96.27px;top:274.21px;font-size:32px;letter-spacing:0.856px;-webkit-text-stroke:0.6px currentColor;'>−69.4%</div>
<div class='t' style='left:225.27px;top:279.84px;font-size:25px;letter-spacing:0.286px;color:#0e1a3c;'>vs Apr <svg class='one' viewBox='0 0 358 716'><path d='M85 0 H289 V716 H196 V78 H85 Z'/></svg>2<span style='display:inline-block;transform:translateY(-0.085em) scaleX(1.5);margin:0 0.07em'>-</span>Jul <svg class='one' viewBox='0 0 358 716'><path d='M85 0 H289 V716 H196 V78 H85 Z'/></svg>3</div>
</div>
<div class='card' style='left:1874.0px'>
<div class='ibox' style='background:#f3edfb'><svg class='abs' style='left:0;top:0' width='80' height='80' viewBox='0 0 80 80' fill='none' stroke='#7c3fcf' stroke-width='2.9' stroke-linecap='round' stroke-linejoin='round'><path d='M27.6 31.5 H20.5 Q17.5 31.5 17.5 34.5 V39.5 Q17.5 42.5 20.5 42.5 H27.6 Z'/><path d='M27.6 31.5 L52.8 21.6 V52.3 L27.6 42.5'/><path d='M24.4 43.2 L26.3 55.9 H31.2 L29.4 44.4'/><path d='M57.2 31.2 L63 27 M57.2 37.9 H63 M57.2 44.3 L63 48.6'/></svg></div>
<div class='t' style='left:145.88px;top:51.76px;font-size:37.5px;letter-spacing:1.753px;-webkit-text-stroke:0.8px currentColor;'>Awareness</div>
<div class='t' style='left:32.50px;top:141.67px;font-size:76px;letter-spacing:3.582px;'>963</div>
<svg class='abs' style='left:40px;top:277px' width='32' height='32' viewBox='0 0 32 32' fill='none' stroke='#ee5fa0' stroke-width='3.6' stroke-linecap='round' stroke-linejoin='round'><path d='M4 5 L27 28'/><path d='M27.8 7.5 V28.8 H6.5'/></svg>
<div class='t' style='left:95.88px;top:274.21px;font-size:32px;letter-spacing:0.956px;-webkit-text-stroke:0.6px currentColor;'>−96.8%</div>
<div class='t' style='left:225.38px;top:279.84px;font-size:25px;letter-spacing:0.286px;color:#0e1a3c;'>vs Apr <svg class='one' viewBox='0 0 358 716'><path d='M85 0 H289 V716 H196 V78 H85 Z'/></svg>2<span style='display:inline-block;transform:translateY(-0.085em) scaleX(1.5);margin:0 0.07em'>-</span>Jul <svg class='one' viewBox='0 0 358 716'><path d='M85 0 H289 V716 H196 V78 H85 Z'/></svg>3</div>
</div>
<div class='card' style='left:2486.5px'>
<div class='ibox' style='background:#fdf0f8'><svg class='abs' style='left:0;top:0' width='80' height='80' viewBox='0 0 80 80' fill='none' stroke='#d1223e' stroke-width='2.9' stroke-linecap='round' stroke-linejoin='round'><path d='M48.9 26.2 L39.2 31.1 M37.7 36.2 L42.2 44.1 M40.3 48.3 L27.2 50.8' stroke-linecap='butt'/><circle cx='52.4' cy='24.5' r='3.9'/><circle cx='35.7' cy='32.8' r='3.9'/><circle cx='44.2' cy='47.5' r='3.9'/><circle cx='23.3' cy='51.6' r='3.9'/></svg></div>
<div class='t' style='left:142.50px;top:51.76px;font-size:37.5px;letter-spacing:2.255px;-webkit-text-stroke:0.8px currentColor;'>Impressions</div>
<div class='t' style='left:27.84px;top:141.67px;font-size:76px;letter-spacing:1.578px;'><svg class='one' viewBox='0 0 358 716'><path d='M85 0 H289 V716 H196 V78 H85 Z'/></svg>.<svg class='one' viewBox='0 0 358 716'><path d='M85 0 H289 V716 H196 V78 H85 Z'/></svg>5m</div>
<svg class='abs' style='left:40px;top:277px' width='32' height='32' viewBox='0 0 32 32' fill='none' stroke='#ee5fa0' stroke-width='3.6' stroke-linecap='round' stroke-linejoin='round'><path d='M4 5 L27 28'/><path d='M27.8 7.5 V28.8 H6.5'/></svg>
<div class='t' style='left:96.67px;top:274.21px;font-size:32px;letter-spacing:0.576px;-webkit-text-stroke:0.6px currentColor;'>−43.4%</div>
<div class='t' style='left:224.27px;top:279.84px;font-size:25px;letter-spacing:0.286px;color:#0e1a3c;'>vs Apr <svg class='one' viewBox='0 0 358 716'><path d='M85 0 H289 V716 H196 V78 H85 Z'/></svg>2<span style='display:inline-block;transform:translateY(-0.085em) scaleX(1.5);margin:0 0.07em'>-</span>Jul <svg class='one' viewBox='0 0 358 716'><path d='M85 0 H289 V716 H196 V78 H85 Z'/></svg>3</div>
</div>
<div class='card' style='left:3100.0px'>
<div class='ibox' style='background:#ebf1fd'><svg class='abs' style='left:0;top:0' width='80' height='80' viewBox='0 0 80 80' fill='none' stroke='#1e6fe8' stroke-width='3' stroke-linecap='round' stroke-linejoin='round'><circle cx='39.9' cy='39.9' r='20.5'/><path d='M39.9 19.4 C29 30 29 49.8 39.9 60.4 C50.8 49.8 50.8 30 39.9 19.4 Z'/><path d='M19.4 40.3 H60.4'/></svg></div>
<div class='t' style='left:145.88px;top:51.76px;font-size:37.5px;letter-spacing:1.573px;-webkit-text-stroke:0.8px currentColor;'>Web visitors</div>
<div class='t' style='left:31.73px;top:141.67px;font-size:76px;letter-spacing:0.369px;'>6<svg class='one' viewBox='0 0 358 716'><path d='M85 0 H289 V716 H196 V78 H85 Z'/></svg>9k</div>
<svg class='abs' style='left:40px;top:277px' width='32' height='32' viewBox='0 0 32 32' fill='none' stroke='#ee5fa0' stroke-width='3.6' stroke-linecap='round' stroke-linejoin='round'><path d='M4 5 L27 28'/><path d='M27.8 7.5 V28.8 H6.5'/></svg>
<div class='t' style='left:96.18px;top:274.21px;font-size:32px;letter-spacing:-0.076px;-webkit-text-stroke:0.6px currentColor;'>−<svg class='one' viewBox='0 0 358 716'><path d='M85 0 H289 V716 H177 V93 H85 Z'/></svg>0.2%</div>
<div class='t' style='left:214.18px;top:279.84px;font-size:25px;letter-spacing:0.286px;color:#0e1a3c;'>vs Apr <svg class='one' viewBox='0 0 358 716'><path d='M85 0 H289 V716 H196 V78 H85 Z'/></svg>2<span style='display:inline-block;transform:translateY(-0.085em) scaleX(1.5);margin:0 0.07em'>-</span>Jul <svg class='one' viewBox='0 0 358 716'><path d='M85 0 H289 V716 H196 V78 H85 Z'/></svg>3</div>
</div>
</div>
<div class='hr' style='left:32px;top:610px;width:3650px;background:#e3e4ef'></div>
<div class='t' style='left:95.88px;top:684.21px;font-size:47px;letter-spacing:1.725px;-webkit-text-stroke:1.3px currentColor;'>Social profile performance</div>
<div class='t' style='left:95.50px;top:763.45px;font-size:29px;letter-spacing:1.199px;color:#6c7b91;'>Comparison of key stats across selected profiles</div>
<div class='t' style='left:126.62px;top:907.95px;font-size:29px;letter-spacing:1.396px;color:#6c7b91;-webkit-text-stroke:0.6px currentColor;'>Profile</div>
<div class='t' style='left:903.62px;top:907.95px;font-size:29px;letter-spacing:1.281px;color:#062a69;-webkit-text-stroke:0.6px currentColor;'>Followers</div>
<div class='t' style='left:1423.12px;top:907.95px;font-size:29px;letter-spacing:1.344px;color:#6c7b91;-webkit-text-stroke:0.6px currentColor;'>Posts</div>
<div class='t' style='left:1846.22px;top:907.95px;font-size:29px;letter-spacing:2.481px;color:#6c7b91;-webkit-text-stroke:0.6px currentColor;'>Engagement</div>
<div class='t' style='left:2475.47px;top:907.95px;font-size:29px;letter-spacing:1.741px;color:#6c7b91;-webkit-text-stroke:0.6px currentColor;'>Awareness</div>
<div class='t' style='left:3041.88px;top:907.95px;font-size:29px;letter-spacing:2.125px;color:#6c7b91;-webkit-text-stroke:0.6px currentColor;'>Impressions</div>
<svg class='abs' style='left:1050px;top:911px' width='28' height='28' viewBox='0 0 28 28' fill='none' stroke='#062a69' stroke-width='2.7' stroke-linecap='round' stroke-linejoin='round'><path d='M14 3.5 V24'/><path d='M4.2 14.6 L14 24.4 L23.8 14.6'/></svg>
<div class='hr' style='left:96px;top:982px;width:3522px'></div>
<svg class='abs' style='left:128.0px;top:1016.0px' width='60' height='60' viewBox='0 0 60 60'><defs><clipPath id='av0'><circle cx='30' cy='30' r='30'/></clipPath></defs><g clip-path='url(#av0)'><rect width='60' height='60' fill='#0665e4'/><path d='M-1 27.5 L9.5 18.2 Q13.5 15 17 19 Q24 28 30 32 Q34.5 35 37.5 35.6 L60 48 V61 H-1 Z' fill='#a5c6f2'/><path d='M36.5 35.8 Q41 34.5 44.5 30.5 Q47.5 27.6 51 29.8 L61 35.5 V61 H36 Z' fill='#e4effb'/><path d='M36.5 35.8 Q40 35 42 33 L48 61 H30 Z' fill='#a5c6f2'/></g></svg>
<div class='abs' style='left:161px;top:1049px;width:26px;height:26px;border-radius:50%;background:#fff'></div>
<svg class='abs' style='left:162px;top:1050px;' width='24' height='24' viewBox='0 0 40 40'><defs><linearGradient id='ig0' x1='0.15' y1='0.1' x2='0.85' y2='0.95'><stop offset='0' stop-color='#7a3fd8'/><stop offset='0.35' stop-color='#c2359f'/><stop offset='0.62' stop-color='#ef4a77'/><stop offset='0.85' stop-color='#fbb044'/><stop offset='1' stop-color='#fcc552'/></linearGradient></defs><circle cx='20' cy='20' r='20' fill='url(#ig0)'/><rect x='9.8' y='9.8' width='20.4' height='20.4' rx='5.4' fill='none' stroke='#fff' stroke-width='2.2'/><circle cx='20' cy='20' r='5' fill='none' stroke='#fff' stroke-width='2.2'/><circle cx='25.9' cy='14.2' r='1.35' fill='#fff'/></svg>
<div class='t' style='left:202.62px;top:1031.45px;font-size:29px;letter-spacing:1.666px;'>Social Media Management Tool for Agencies</div>
<div class='abs' style='left:204px;top:1058px;width:637.0px;height:2px;background:#062a69'></div>
<div class='t' style='left:904.88px;top:1029.80px;font-size:28px;letter-spacing:0.306px;'>3.2k</div>
<div class='t' style='left:967.34px;top:1029.80px;font-size:28px;letter-spacing:-0.084px;color:#27ae60;'>+3%</div>
<div class='t' style='left:1423.12px;top:1029.80px;font-size:28px;letter-spacing:2.241px;'><svg class='one' viewBox='0 0 358 716'><path d='M85 0 H289 V716 H196 V78 H85 Z'/></svg>02</div>
<div class='t' style='left:1477.95px;top:1029.80px;font-size:28px;letter-spacing:-1.053px;color:#e8384f;'>−<svg class='one' viewBox='0 0 358 716'><path d='M85 0 H289 V716 H196 V78 H85 Z'/></svg>5.7%</div>
<div class='t' style='left:1847.22px;top:1029.80px;font-size:28px;letter-spacing:0.389px;'>2.3k</div>
<div class='t' style='left:1909.94px;top:1029.80px;font-size:28px;letter-spacing:-0.896px;color:#e8384f;'>−97.<svg class='one' viewBox='0 0 358 716'><path d='M85 0 H289 V716 H196 V78 H85 Z'/></svg>%</div>
<div class='t' style='left:2474.22px;top:1029.80px;font-size:28px;letter-spacing:1.752px;'>635</div>
<div class='t' style='left:2533.87px;top:1029.80px;font-size:28px;letter-spacing:-0.578px;color:#e8384f;'>−97.8%</div>
<div class='t' style='left:3043.12px;top:1029.80px;font-size:28px;letter-spacing:0.982px;'>234.8k</div>
<div class='t' style='left:3140.73px;top:1029.80px;font-size:28px;letter-spacing:0.027px;color:#e8384f;'>−84.9%</div>
<div class='hr' style='left:96px;top:1108px;width:3522px'></div>
<svg class='abs' style='left:129.5px;top:1143.5px' width='57' height='57' viewBox='0 0 60 60'><defs><clipPath id='av1'><circle cx='30' cy='30' r='30'/></clipPath></defs><g clip-path='url(#av1)'><rect width='60' height='60' fill='#0665e4'/><path d='M-1 27.5 L9.5 18.2 Q13.5 15 17 19 Q24 28 30 32 Q34.5 35 37.5 35.6 L60 48 V61 H-1 Z' fill='#a5c6f2'/><path d='M36.5 35.8 Q41 34.5 44.5 30.5 Q47.5 27.6 51 29.8 L61 35.5 V61 H36 Z' fill='#e4effb'/><path d='M36.5 35.8 Q40 35 42 33 L48 61 H30 Z' fill='#a5c6f2'/></g></svg>
<div class='abs' style='left:161px;top:1175px;width:26px;height:26px;border-radius:50%;background:#fff'></div>
<svg class='abs' style='left:162px;top:1176px;' width='24' height='24' viewBox='0 0 40 40'><circle cx='20' cy='20' r='20' fill='#000'/><path transform='translate(10.00 10.00) scale(0.8333)' d='M18.901 1.153h3.68l-8.04 9.19L24 22.846h-7.406l-5.8-7.584-6.638 7.584H.474l8.6-9.83L0 1.154h7.594l5.243 6.932ZM17.61 20.644h2.039L6.486 3.24H4.298Z' fill='#fff' /></svg>
<div class='t' style='left:203.88px;top:1157.45px;font-size:29px;letter-spacing:1.420px;'>Vista Social</div>
<div class='abs' style='left:204px;top:1184px;width:165.5px;height:2px;background:#062a69'></div>
<div class='t' style='left:904.62px;top:1155.80px;font-size:28px;letter-spacing:0.632px;'>2.8k</div>
<div class='t' style='left:968.07px;top:1155.80px;font-size:28px;letter-spacing:0.686px;color:#27ae60;'>+0.4%</div>
<div class='t' style='left:1424.38px;top:1155.80px;font-size:28px;letter-spacing:3.077px;'>30</div>
<div class='t' style='left:1468.15px;top:1155.80px;font-size:28px;letter-spacing:-0.163px;color:#e8384f;'>−49.2%</div>
<div class='t' style='left:1847.47px;top:1155.80px;font-size:28px;letter-spacing:2.390px;'>56</div>
<div class='t' style='left:1890.44px;top:1155.80px;font-size:28px;letter-spacing:-0.740px;color:#e8384f;'>−37.8%</div>
<div class='t' style='left:2473.22px;top:1155.80px;font-size:28px;letter-spacing:0.455px;'><svg class='one' viewBox='0 0 358 716'><path d='M85 0 H289 V716 H196 V78 H85 Z'/></svg>7</div>
<div class='t' style='left:2508.45px;top:1155.80px;font-size:28px;letter-spacing:-0.466px;color:#e8384f;'>−29.2%</div>
<div class='t' style='left:3043.12px;top:1155.80px;font-size:28px;letter-spacing:0.101px;'>2.<svg class='one' viewBox='0 0 358 716'><path d='M85 0 H289 V716 H196 V78 H85 Z'/></svg>k</div>
<div class='t' style='left:3099.43px;top:1155.80px;font-size:28px;letter-spacing:-0.635px;color:#27ae60;'>+7<svg class='one' viewBox='0 0 358 716'><path d='M85 0 H289 V716 H196 V78 H85 Z'/></svg>%</div>
<div class='hr' style='left:96px;top:1234px;width:3522px'></div>
<svg class='abs' style='left:128.0px;top:1268.0px' width='60' height='60' viewBox='0 0 60 60'><defs><clipPath id='av2'><circle cx='30' cy='30' r='30'/></clipPath></defs><g clip-path='url(#av2)'><rect width='60' height='60' fill='#0665e4'/><path d='M-1 27.5 L9.5 18.2 Q13.5 15 17 19 Q24 28 30 32 Q34.5 35 37.5 35.6 L60 48 V61 H-1 Z' fill='#a5c6f2'/><path d='M36.5 35.8 Q41 34.5 44.5 30.5 Q47.5 27.6 51 29.8 L61 35.5 V61 H36 Z' fill='#e4effb'/><path d='M36.5 35.8 Q40 35 42 33 L48 61 H30 Z' fill='#a5c6f2'/></g></svg>
<div class='abs' style='left:161px;top:1301px;width:26px;height:26px;border-radius:50%;background:#fff'></div>
<svg class='abs' style='left:162px;top:1302px;' width='24' height='24' viewBox='0 0 40 40'><circle cx='20' cy='20' r='20' fill='#0077b5'/><circle cx='12.6' cy='12.4' r='2.45' fill='#fff'/><rect x='10.4' y='16.4' width='4.4' height='13.8' fill='#fff'/><path d='M17.6 16.4 H21.8 V18.3 C22.6 16.9 24.2 16 26.2 16 C29.6 16 31.2 18 31.2 21.6 V30.2 H26.8 V22.6 C26.8 20.7 26.1 19.6 24.6 19.6 C23 19.6 22 20.7 22 22.6 V30.2 H17.6 Z' fill='#fff'/></svg>
<div class='t' style='left:203.88px;top:1283.45px;font-size:29px;letter-spacing:1.420px;'>Vista Social</div>
<div class='abs' style='left:204px;top:1310px;width:165.5px;height:2px;background:#062a69'></div>
<div class='t' style='left:904.62px;top:1281.80px;font-size:28px;letter-spacing:0.101px;'>2.<svg class='one' viewBox='0 0 358 716'><path d='M85 0 H289 V716 H196 V78 H85 Z'/></svg>k</div>
<div class='t' style='left:960.93px;top:1281.80px;font-size:28px;letter-spacing:-0.344px;color:#27ae60;'>+<svg class='one' viewBox='0 0 358 716'><path d='M85 0 H289 V716 H196 V78 H85 Z'/></svg><svg class='one' viewBox='0 0 358 716'><path d='M85 0 H289 V716 H196 V78 H85 Z'/></svg>%</div>
<div class='t' style='left:1424.38px;top:1281.80px;font-size:28px;letter-spacing:2.487px;'>39</div>
<div class='t' style='left:1467.31px;top:1281.80px;font-size:28px;letter-spacing:-0.084px;color:#27ae60;'>+3%</div>
<div class='t' style='left:1847.35px;top:1281.80px;font-size:28px;letter-spacing:2.053px;'>865</div>
<div class='t' style='left:1907.60px;top:1281.80px;font-size:28px;letter-spacing:-0.118px;color:#e8384f;'>−34.6%</div>
<div class='t' style='left:2474.47px;top:1281.80px;font-size:28px;letter-spacing:2.278px;'>38</div>
<div class='t' style='left:2517.32px;top:1281.80px;font-size:28px;letter-spacing:-0.549px;color:#e8384f;'>−<svg class='one' viewBox='0 0 358 716'><path d='M85 0 H289 V716 H196 V78 H85 Z'/></svg>3.6%</div>
<div class='t' style='left:3043.25px;top:1281.80px;font-size:28px;letter-spacing:0.693px;'>9.3k</div>
<div class='t' style='left:3106.88px;top:1281.80px;font-size:28px;letter-spacing:0.932px;color:#27ae60;'>+46%</div>
<div class='hr' style='left:96px;top:1360px;width:3522px'></div>
<svg class='abs' style='left:128.0px;top:1394.0px' width='60' height='60' viewBox='0 0 60 60'><defs><clipPath id='av3'><circle cx='30' cy='30' r='30'/></clipPath></defs><g clip-path='url(#av3)'><rect width='60' height='60' fill='#0665e4'/><path d='M-1 27.5 L9.5 18.2 Q13.5 15 17 19 Q24 28 30 32 Q34.5 35 37.5 35.6 L60 48 V61 H-1 Z' fill='#a5c6f2'/><path d='M36.5 35.8 Q41 34.5 44.5 30.5 Q47.5 27.6 51 29.8 L61 35.5 V61 H36 Z' fill='#e4effb'/><path d='M36.5 35.8 Q40 35 42 33 L48 61 H30 Z' fill='#a5c6f2'/></g></svg>
<div class='abs' style='left:161px;top:1427px;width:26px;height:26px;border-radius:50%;background:#fff'></div>
<svg class='abs' style='left:162px;top:1428px;' width='24' height='24' viewBox='0 0 40 40'><circle cx='20' cy='20' r='20' fill='#ff0000'/><rect x='9.4' y='12.8' width='21.2' height='14.8' rx='3.6' fill='#fff'/><path d='M17.8 16.8 L23.6 20.2 L17.8 23.6 Z' fill='#ff0000'/></svg>
<div class='t' style='left:203.88px;top:1409.45px;font-size:29px;letter-spacing:1.420px;'>Vista Social</div>
<div class='abs' style='left:204px;top:1436px;width:165.5px;height:2px;background:#062a69'></div>
<div class='t' style='left:903.62px;top:1407.80px;font-size:28px;letter-spacing:0.520px;'><svg class='one' viewBox='0 0 358 716'><path d='M85 0 H289 V716 H196 V78 H85 Z'/></svg>.5k</div>
<div class='t' style='left:961.18px;top:1407.80px;font-size:28px;letter-spacing:0.495px;color:#27ae60;'>+<svg class='one' viewBox='0 0 358 716'><path d='M85 0 H289 V716 H196 V78 H85 Z'/></svg>0%</div>
<div class='t' style='left:1423.12px;top:1407.80px;font-size:28px;letter-spacing:1.402px;'><svg class='one' viewBox='0 0 358 716'><path d='M85 0 H289 V716 H196 V78 H85 Z'/></svg>33</div>
<div class='t' style='left:1476.52px;top:1407.80px;font-size:28px;letter-spacing:-0.925px;color:#27ae60;'>+77%</div>
<div class='t' style='left:1847.22px;top:1407.80px;font-size:28px;letter-spacing:0.632px;'>2.8k</div>
<div class='t' style='left:1910.67px;top:1407.80px;font-size:28px;letter-spacing:0.745px;color:#27ae60;'>+68%</div>
<div class='t' style='left:2474.47px;top:1407.80px;font-size:28px;'>0</div>
<div class='t' style='left:2502.06px;top:1407.80px;font-size:28px;letter-spacing:1.066px;color:#27ae60;'>0%</div>
<div class='t' style='left:3043.12px;top:1407.80px;font-size:28px;letter-spacing:0.361px;'>2<svg class='one' viewBox='0 0 358 716'><path d='M85 0 H289 V716 H196 V78 H85 Z'/></svg>2.3k</div>
<div class='t' style='left:3132.08px;top:1407.80px;font-size:28px;letter-spacing:0.428px;color:#27ae60;'>+29%</div>
<div class='hr' style='left:96px;top:1486px;width:3522px'></div>
<svg class='abs' style='left:128.0px;top:1520.0px' width='60' height='60' viewBox='0 0 60 60'><defs><clipPath id='av4'><circle cx='30' cy='30' r='30'/></clipPath></defs><g clip-path='url(#av4)'><rect width='60' height='60' fill='#0665e4'/><path d='M-1 27.5 L9.5 18.2 Q13.5 15 17 19 Q24 28 30 32 Q34.5 35 37.5 35.6 L60 48 V61 H-1 Z' fill='#a5c6f2'/><path d='M36.5 35.8 Q41 34.5 44.5 30.5 Q47.5 27.6 51 29.8 L61 35.5 V61 H36 Z' fill='#e4effb'/><path d='M36.5 35.8 Q40 35 42 33 L48 61 H30 Z' fill='#a5c6f2'/></g></svg>
<div class='abs' style='left:161px;top:1553px;width:26px;height:26px;border-radius:50%;background:#fff'></div>
<svg class='abs' style='left:162px;top:1554px;' width='24' height='24' viewBox='0 0 40 40'><circle cx='20' cy='20' r='20' fill='#1185fe'/><path transform='translate(7.75 8.55) scale(1.0208)' d='M12 10.8c-1.087-2.114-4.046-6.053-6.798-7.995C2.566.944 1.561 1.266.902 1.565.139 1.908 0 3.08 0 3.768c0 .69.378 5.65.624 6.479.815 2.736 3.713 3.66 6.383 3.364.136-.02.275-.039.415-.056-.138.022-.276.04-.415.056-3.912.58-7.387 2.005-2.83 7.078 5.013 5.19 6.87-1.113 7.823-4.308.953 3.195 2.05 9.271 7.733 4.308 4.267-4.308 1.172-6.498-2.74-7.078a8.741 8.741 0 0 1-.415-.056c.14.017.279.036.415.056 2.67.297 5.568-.628 6.383-3.364.246-.828.624-5.79.624-6.478 0-.69-.139-1.861-.902-2.206-.659-.298-1.664-.62-4.3 1.24C16.046 4.748 13.087 8.687 12 10.8Z' fill='#fff' /></svg>
<div class='t' style='left:203.88px;top:1535.45px;font-size:29px;letter-spacing:1.420px;'>Vista Social</div>
<div class='abs' style='left:204px;top:1562px;width:165.5px;height:2px;background:#062a69'></div>
<div class='t' style='left:904.75px;top:1533.80px;font-size:28px;letter-spacing:2.865px;'>908</div>
<div class='t' style='left:966.62px;top:1533.80px;font-size:28px;letter-spacing:0.495px;color:#27ae60;'>+<svg class='one' viewBox='0 0 358 716'><path d='M85 0 H289 V716 H196 V78 H85 Z'/></svg>0%</div>
<div class='t' style='left:1424.12px;top:1533.80px;font-size:28px;letter-spacing:2.388px;'>26</div>
<div class='t' style='left:1467.09px;top:1533.80px;font-size:28px;letter-spacing:-0.381px;color:#e8384f;'>−<svg class='one' viewBox='0 0 358 716'><path d='M85 0 H289 V716 H196 V78 H85 Z'/></svg>0.3%</div>
<div class='t' style='left:1847.47px;top:1533.80px;font-size:28px;letter-spacing:3.105px;'>50</div>
<div class='t' style='left:1891.28px;top:1533.80px;font-size:28px;letter-spacing:0.503px;color:#27ae60;'>+39%</div>
<div class='t' style='left:2474.22px;top:1533.80px;font-size:28px;'>2</div>
<div class='t' style='left:2500.19px;top:1533.80px;font-size:28px;letter-spacing:1.066px;color:#27ae60;'>0%</div>
<div class='t' style='left:3043.38px;top:1533.80px;font-size:28px;'>0</div>
<div class='t' style='left:3070.96px;top:1533.80px;font-size:28px;letter-spacing:1.066px;color:#27ae60;'>0%</div>
<div class='hr' style='left:96px;top:1612px;width:3522px'></div>
<svg class='abs' style='left:128.0px;top:1646.0px' width='60' height='60' viewBox='0 0 60 60'><defs><clipPath id='av5'><circle cx='30' cy='30' r='30'/></clipPath></defs><g clip-path='url(#av5)'><rect width='60' height='60' fill='#0665e4'/><path d='M-1 27.5 L9.5 18.2 Q13.5 15 17 19 Q24 28 30 32 Q34.5 35 37.5 35.6 L60 48 V61 H-1 Z' fill='#a5c6f2'/><path d='M36.5 35.8 Q41 34.5 44.5 30.5 Q47.5 27.6 51 29.8 L61 35.5 V61 H36 Z' fill='#e4effb'/><path d='M36.5 35.8 Q40 35 42 33 L48 61 H30 Z' fill='#a5c6f2'/></g></svg>
<div class='abs' style='left:161px;top:1679px;width:26px;height:26px;border-radius:50%;background:#fff'></div>
<svg class='abs' style='left:162px;top:1680px;' width='24' height='24' viewBox='0 0 40 40'><circle cx='20' cy='20' r='20' fill='#000'/><path transform='translate(9.55 9.85) scale(0.8125)' d='M12.525.02c1.31-.02 2.61-.01 3.91-.02.08 1.53.63 3.09 1.75 4.17 1.12 1.11 2.7 1.62 4.24 1.79v4.03c-1.44-.05-2.89-.35-4.2-.97-.57-.26-1.1-.59-1.62-.93-.01 2.92.01 5.84-.02 8.75-.08 1.4-.54 2.79-1.35 3.94-1.31 1.92-3.58 3.17-5.91 3.21-1.43.08-2.86-.31-4.08-1.03-2.02-1.19-3.44-3.37-3.65-5.71-.02-.5-.03-1-.01-1.49.18-1.9 1.12-3.72 2.58-4.96 1.66-1.44 3.98-2.13 6.15-1.72.02 1.48-.04 2.96-.04 4.44-.99-.32-2.15-.23-3.02.37-.63.41-1.11 1.04-1.36 1.75-.21.51-.15 1.07-.14 1.61.24 1.64 1.82 3.02 3.5 2.87 1.12-.01 2.19-.66 2.77-1.61.19-.33.4-.67.41-1.06.1-1.79.06-3.57.07-5.36.01-4.03-.01-8.05.02-12.07z' fill='#25f4ee' /><path transform='translate(10.95 10.85) scale(0.8125)' d='M12.525.02c1.31-.02 2.61-.01 3.91-.02.08 1.53.63 3.09 1.75 4.17 1.12 1.11 2.7 1.62 4.24 1.79v4.03c-1.44-.05-2.89-.35-4.2-.97-.57-.26-1.1-.59-1.62-.93-.01 2.92.01 5.84-.02 8.75-.08 1.4-.54 2.79-1.35 3.94-1.31 1.92-3.58 3.17-5.91 3.21-1.43.08-2.86-.31-4.08-1.03-2.02-1.19-3.44-3.37-3.65-5.71-.02-.5-.03-1-.01-1.49.18-1.9 1.12-3.72 2.58-4.96 1.66-1.44 3.98-2.13 6.15-1.72.02 1.48-.04 2.96-.04 4.44-.99-.32-2.15-.23-3.02.37-.63.41-1.11 1.04-1.36 1.75-.21.51-.15 1.07-.14 1.61.24 1.64 1.82 3.02 3.5 2.87 1.12-.01 2.19-.66 2.77-1.61.19-.33.4-.67.41-1.06.1-1.79.06-3.57.07-5.36.01-4.03-.01-8.05.02-12.07z' fill='#fe2c55' /><path transform='translate(10.25 10.35) scale(0.8125)' d='M12.525.02c1.31-.02 2.61-.01 3.91-.02.08 1.53.63 3.09 1.75 4.17 1.12 1.11 2.7 1.62 4.24 1.79v4.03c-1.44-.05-2.89-.35-4.2-.97-.57-.26-1.1-.59-1.62-.93-.01 2.92.01 5.84-.02 8.75-.08 1.4-.54 2.79-1.35 3.94-1.31 1.92-3.58 3.17-5.91 3.21-1.43.08-2.86-.31-4.08-1.03-2.02-1.19-3.44-3.37-3.65-5.71-.02-.5-.03-1-.01-1.49.18-1.9 1.12-3.72 2.58-4.96 1.66-1.44 3.98-2.13 6.15-1.72.02 1.48-.04 2.96-.04 4.44-.99-.32-2.15-.23-3.02.37-.63.41-1.11 1.04-1.36 1.75-.21.51-.15 1.07-.14 1.61.24 1.64 1.82 3.02 3.5 2.87 1.12-.01 2.19-.66 2.77-1.61.19-.33.4-.67.41-1.06.1-1.79.06-3.57.07-5.36.01-4.03-.01-8.05.02-12.07z' fill='#fff' /></svg>
<div class='t' style='left:203.88px;top:1661.45px;font-size:29px;letter-spacing:1.420px;'>Vista Social</div>
<div class='abs' style='left:204px;top:1688px;width:165.5px;height:2px;background:#062a69'></div>
<div class='t' style='left:904.62px;top:1659.80px;font-size:28px;letter-spacing:0.883px;'>627</div>
<div class='t' style='left:962.28px;top:1659.80px;font-size:28px;letter-spacing:0.322px;color:#27ae60;'>+9%</div>
<div class='t' style='left:1424.12px;top:1659.80px;font-size:28px;letter-spacing:0.090px;'>72</div>
<div class='t' style='left:1464.54px;top:1659.80px;font-size:28px;letter-spacing:0.322px;color:#27ae60;'>+6%</div>
<div class='t' style='left:1847.97px;top:1659.80px;font-size:28px;letter-spacing:0.355px;'>4.<svg class='one' viewBox='0 0 358 716'><path d='M85 0 H289 V716 H196 V78 H85 Z'/></svg>k</div>
<div class='t' style='left:1905.04px;top:1659.80px;font-size:28px;letter-spacing:0.773px;color:#27ae60;'>+66%</div>
<div class='t' style='left:2474.22px;top:1659.80px;font-size:28px;letter-spacing:2.228px;'>248</div>
<div class='t' style='left:2534.82px;top:1659.80px;font-size:28px;letter-spacing:0.932px;color:#27ae60;'>+94%</div>
<div class='t' style='left:3043.12px;top:1659.80px;font-size:28px;letter-spacing:0.524px;'>2<svg class='one' viewBox='0 0 358 716'><path d='M85 0 H289 V716 H196 V78 H85 Z'/></svg>2.9k</div>
<div class='t' style='left:3132.89px;top:1659.80px;font-size:28px;letter-spacing:0.859px;color:#27ae60;'>+294%</div>
<div class='hr' style='left:96px;top:1738px;width:3522px'></div>
<svg class='abs' style='left:128.0px;top:1772.0px' width='60' height='60' viewBox='0 0 60 60'><defs><clipPath id='av6'><circle cx='30' cy='30' r='30'/></clipPath></defs><g clip-path='url(#av6)'><rect width='60' height='60' fill='#0665e4'/><path d='M-1 27.5 L9.5 18.2 Q13.5 15 17 19 Q24 28 30 32 Q34.5 35 37.5 35.6 L60 48 V61 H-1 Z' fill='#a5c6f2'/><path d='M36.5 35.8 Q41 34.5 44.5 30.5 Q47.5 27.6 51 29.8 L61 35.5 V61 H36 Z' fill='#e4effb'/><path d='M36.5 35.8 Q40 35 42 33 L48 61 H30 Z' fill='#a5c6f2'/></g></svg>
<div class='abs' style='left:161px;top:1805px;width:26px;height:26px;border-radius:50%;background:#fff'></div>
<svg class='abs' style='left:162px;top:1806px;' width='24' height='24' viewBox='0 0 40 40'><circle cx='20' cy='20' r='20' fill='#000'/><path transform='translate(9.50 9.50) scale(0.8750)' d='M12.186 24h-.007c-3.581-.024-6.334-1.205-8.184-3.509C2.35 18.44 1.5 15.586 1.472 12.01v-.017c.03-3.579.879-6.43 2.525-8.482C5.845 1.205 8.6.024 12.18 0h.014c2.746.02 5.043.725 6.826 2.098 1.677 1.29 2.858 3.13 3.509 5.467l-2.04.569c-1.104-3.96-3.898-5.984-8.304-6.015-2.91.022-5.11.936-6.54 2.717C4.307 6.504 3.616 8.914 3.589 12c.027 3.086.718 5.496 2.057 7.164 1.43 1.783 3.631 2.698 6.54 2.717 2.623-.02 4.358-.631 5.8-2.045 1.647-1.613 1.618-3.593 1.09-4.798-.31-.71-.873-1.3-1.634-1.75-.192 1.352-.622 2.446-1.284 3.272-.886 1.102-2.14 1.704-3.73 1.79-1.202.065-2.361-.218-3.259-.801-1.063-.689-1.685-1.74-1.752-2.964-.065-1.19.408-2.285 1.33-3.082.88-.76 2.119-1.207 3.583-1.291a13.853 13.853 0 0 1 3.02.142c-.126-.742-.375-1.332-.75-1.757-.513-.586-1.308-.883-2.359-.89h-.029c-.844 0-1.992.232-2.721 1.32L7.734 7.847c.98-1.454 2.568-2.256 4.478-2.256h.044c3.194.02 5.097 1.975 5.287 5.388.108.046.216.094.321.142 1.49.7 2.58 1.761 3.154 3.07.797 1.82.871 4.79-1.548 7.158-1.85 1.81-4.094 2.628-7.277 2.65Zm1.003-11.69c-.242 0-.487.007-.739.021-1.836.103-2.98.946-2.916 2.143.067 1.256 1.452 1.839 2.784 1.767 1.224-.065 2.818-.543 3.086-3.71a10.5 10.5 0 0 0-2.215-.221z' fill='#fff' /></svg>
<div class='t' style='left:203.88px;top:1787.45px;font-size:29px;letter-spacing:2.204px;'>vistasocialapp</div>
<div class='abs' style='left:204px;top:1814px;width:210.4px;height:2px;background:#062a69'></div>
<div class='t' style='left:904.62px;top:1785.80px;font-size:28px;letter-spacing:1.640px;'>625</div>
<div class='t' style='left:964.05px;top:1785.80px;font-size:28px;letter-spacing:-0.516px;color:#27ae60;'>+<svg class='one' viewBox='0 0 358 716'><path d='M85 0 H289 V716 H196 V78 H85 Z'/></svg>%</div>
<div class='t' style='left:1423.12px;top:1785.80px;font-size:28px;letter-spacing:2.753px;'><svg class='one' viewBox='0 0 358 716'><path d='M85 0 H289 V716 H196 V78 H85 Z'/></svg>6</div>
<div class='t' style='left:1460.90px;top:1785.80px;font-size:28px;letter-spacing:-0.538px;color:#e8384f;'>−33.3%</div>
<div class='t' style='left:1847.47px;top:1785.80px;font-size:28px;letter-spacing:3.077px;'>30</div>
<div class='t' style='left:1891.25px;top:1785.80px;font-size:28px;letter-spacing:-0.047px;color:#27ae60;'>+<svg class='one' viewBox='0 0 358 716'><path d='M85 0 H289 V716 H196 V78 H85 Z'/></svg>5%</div>
<div class='t' style='left:2473.22px;top:1785.80px;font-size:28px;letter-spacing:3.468px;'><svg class='one' viewBox='0 0 358 716'><path d='M85 0 H289 V716 H196 V78 H85 Z'/></svg>0</div>
<div class='t' style='left:2511.84px;top:1785.80px;font-size:28px;letter-spacing:1.000px;color:#27ae60;'>+<svg class='one' viewBox='0 0 358 716'><path d='M85 0 H289 V716 H196 V78 H85 Z'/></svg>00%</div>
<div class='t' style='left:3042.12px;top:1785.80px;font-size:28px;letter-spacing:0.223px;'><svg class='one' viewBox='0 0 358 716'><path d='M85 0 H289 V716 H196 V78 H85 Z'/></svg>.<svg class='one' viewBox='0 0 358 716'><path d='M85 0 H289 V716 H196 V78 H85 Z'/></svg>k</div>
<div class='t' style='left:3093.24px;top:1785.80px;font-size:28px;letter-spacing:0.671px;color:#27ae60;'>+45%</div>
<div class='hr' style='left:96px;top:1864px;width:3522px'></div>
<svg class='abs' style='left:130.0px;top:1900.0px' width='56' height='56' viewBox='0 0 60 60'><defs><clipPath id='av7'><circle cx='30' cy='30' r='30'/></clipPath></defs><g clip-path='url(#av7)'><rect width='60' height='60' fill='#2f5fdb'/><path d='M-1 27.5 L9.5 18.2 Q13.5 15 17 19 Q24 28 30 32 Q34.5 35 37.5 35.6 L60 48 V61 H-1 Z' fill='#aec4f2'/><path d='M36.5 35.8 Q41 34.5 44.5 30.5 Q47.5 27.6 51 29.8 L61 35.5 V61 H36 Z' fill='#e4effb'/><path d='M36.5 35.8 Q40 35 42 33 L48 61 H30 Z' fill='#aec4f2'/></g></svg>
<div class='abs' style='left:161px;top:1931px;width:26px;height:26px;border-radius:50%;background:#fff'></div>
<svg class='abs' style='left:162px;top:1932px;' width='24' height='24' viewBox='0 0 40 40'><circle cx='20' cy='20' r='19.6' fill='#fff'/><path transform='translate(0.00 0.00) scale(1.6667)' d='M9.101 23.691v-7.98H6.627v-3.667h2.474v-1.58c0-4.085 1.848-5.978 5.858-5.978.401 0 .955.042 1.468.103a8.68 8.68 0 0 1 1.141.195v3.325a8.623 8.623 0 0 0-.653-.036 26.805 26.805 0 0 0-.733-.009c-.707 0-1.259.096-1.675.309a1.686 1.686 0 0 0-.679.622c-.258.42-.374.995-.374 1.752v1.297h3.919l-.386 2.103-.287 1.564h-3.246v8.245C19.396 23.238 24 18.179 24 12.044c0-6.627-5.373-12-12-12s-12 5.373-12 12c0 5.628 3.874 10.35 9.101 11.647Z' fill='#0866ff' /></svg>
<div class='t' style='left:203.88px;top:1913.45px;font-size:29px;letter-spacing:1.420px;'>Vista Social</div>
<div class='abs' style='left:204px;top:1940px;width:165.5px;height:2px;background:#062a69'></div>
<div class='t' style='left:904.62px;top:1911.80px;font-size:28px;letter-spacing:1.626px;'>623</div>
<div class='t' style='left:964.02px;top:1911.80px;font-size:28px;letter-spacing:0.280px;color:#27ae60;'>+8%</div>
<div class='t' style='left:1424.38px;top:1911.80px;font-size:28px;letter-spacing:1.576px;'>32</div>
<div class='t' style='left:1466.27px;top:1911.80px;font-size:28px;letter-spacing:-0.438px;color:#e8384f;'>−23.8%</div>
<div class='t' style='left:1846.22px;top:1911.80px;font-size:28px;letter-spacing:1.065px;'><svg class='one' viewBox='0 0 358 716'><path d='M85 0 H289 V716 H196 V78 H85 Z'/></svg>97</div>
<div class='t' style='left:1898.70px;top:1911.80px;font-size:28px;letter-spacing:0.083px;color:#27ae60;'>+22%</div>
<div class='t' style='left:2473.22px;top:1911.80px;font-size:28px;letter-spacing:1.941px;'><svg class='one' viewBox='0 0 358 716'><path d='M85 0 H289 V716 H196 V78 H85 Z'/></svg>3</div>
<div class='t' style='left:2510.18px;top:1911.80px;font-size:28px;letter-spacing:0.790px;color:#27ae60;'>+<svg class='one' viewBox='0 0 358 716'><path d='M85 0 H289 V716 H196 V78 H85 Z'/></svg>60%</div>
<div class='t' style='left:3043.12px;top:1911.80px;font-size:28px;letter-spacing:1.385px;'>200.8k</div>
<div class='t' style='left:3142.74px;top:1911.80px;font-size:28px;letter-spacing:0.102px;color:#27ae60;'>+<svg class='one' viewBox='0 0 358 716'><path d='M85 0 H289 V716 H196 V78 H85 Z'/></svg>,750%</div>
<div class='hr' style='left:96px;top:1990px;width:3522px'></div>
<div class='abs' style='left:3698px;top:234px;width:12px;height:240px;border-radius:6px;background:#c1c1c1'></div>
</div>
<div class='abs' style='left:3756px;top:52px;width:40px;height:40px;border-radius:50%;background:#fff'></div><svg class='abs' style='left:3765px;top:61px' width='22' height='22' viewBox='0 0 22 22' fill='none' stroke='#9a9cb6' stroke-width='2.8' stroke-linecap='butt'><path d='M1.6 1.6 L20.4 20.4 M20.4 1.6 L1.6 20.4'/></svg>
</body></html>
